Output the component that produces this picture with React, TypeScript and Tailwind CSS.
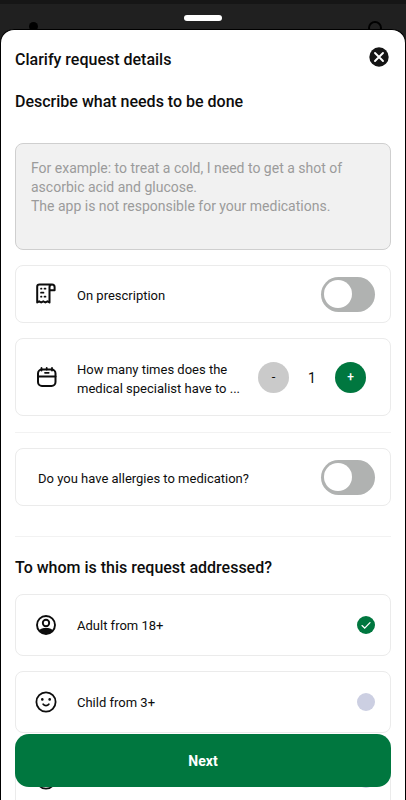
import React, { useState } from 'react';

const ReceiptIcon = () => <svg width="22" height="22" viewBox="0 0 22 22" fill="none" stroke="#0d0d0d" strokeWidth="2" strokeLinejoin="round" strokeLinecap="round" className="shrink-0">
    <path d="M17 1.500H4.500C3 1.500 2.200 2.300 2.200 3.800V19.500l2-1.200 2 1.200 2.100-1.200 2.100 1.200 2-1.200 2.100 1.200V4c0-1.500 1-2.500 2.500-2.500s2.600 1 2.600 2.500v3.300H14.800" />
    <path d="M6 5.700h.5M9.500 5.700h1M6 9.700h2.500M6 13.700h.5M9.500 13.700h1" strokeWidth="1.700" />
  </svg>;

const CalendarIcon = () => <svg width="22" height="22" viewBox="0 0 22 22" fill="none" stroke="#0d0d0d" strokeWidth="2" strokeLinecap="round" className="shrink-0">
    <rect x="3" y="3.500" width="17.500" height="16.500" rx="4" />
    <path d="M3 10.500h17.500" />
    <path d="M6.500 2v2.500M11.700 2v1.500M17 2v2.500M10 6.800h3.700" strokeWidth="1.800" />
  </svg>;

const AdultIcon = () => <svg width="22" height="22" viewBox="0 0 22 22" fill="none" stroke="#0d0d0d" strokeWidth="1.900" className="shrink-0">
    <circle cx="11" cy="11" r="9" />
    <circle cx="11" cy="9" r="3.200" />
    <path d="M4.200 16.200C5.500 14.600 8 14 11 14s5.500.6 6.800 2.200C16.300 18.800 13.800 20 11 20s-5.300-1.200-6.800-3.800Z" fill="#0d0d0d" stroke="none" />
  </svg>;

const SmileIcon = () => <svg width="22" height="22" viewBox="0 0 22 22" fill="none" stroke="#0d0d0d" strokeWidth="1.800" strokeLinecap="round" className="shrink-0">
    <circle cx="11" cy="11" r="9.600" />
    <path d="M8.200 13.200c1.400 1.800 4.200 1.800 5.600 0" />
    <circle cx="7.300" cy="8.400" r="1.300" fill="#0d0d0d" stroke="none" />
    <circle cx="14.700" cy="8.400" r="1.300" fill="#0d0d0d" stroke="none" />
  </svg>;

const Toggle = ({ id }: { id: string }) => <input id={id} type="checkbox" role="switch" className="flex h-[35px] w-[54px] shrink-0 appearance-none items-center rounded-full bg-[#b0b2b1] px-[3px] before:size-7 before:rounded-full before:bg-white checked:justify-end checked:bg-[#00773f]" />;

const App = () => {
  const [visits, setVisits] = useState(1);
  const [person, setPerson] = useState('adult');
  const people = [{
    id: 'adult',
    label: 'Adult from 18+',
    icon: <AdultIcon />
  }, {
    id: 'child',
    label: 'Child from 3+',
    icon: <SmileIcon />
  }, {
    id: 'baby',
    label: 'Child under 3',
    icon: <SmileIcon />
  }];
  return <div className="flex h-screen flex-col overflow-hidden border-t-4 border-[#161616] bg-[#202020] font-[Roboto,sans-serif] text-[#0d0d0d]">
      <header className="relative h-[25px] shrink-0">
        <div className="mx-auto flex h-full w-[38px] items-center pb-px">
          <div className="mt-1 h-[6px] w-full rounded-full bg-white"></div>
        </div>
        <div className="absolute left-[29px] top-[18px] size-[9px] rounded-full bg-black"></div>
        <div className="absolute right-6 top-[17px] size-[14px] rounded-full border-2 border-black"></div>
      </header>

      <main className="relative min-h-0 flex-1 overflow-hidden rounded-t-[14px] border border-b-0 border-black bg-white">
        <div className="h-full overflow-y-auto px-[14px] pb-20 [scrollbar-width:none]">
          <div className="flex items-start justify-between pt-[17px]">
            <h1 className="pt-[3px] text-base font-medium leading-5">Clarify request details</h1>
            <button type="button" aria-label="Close" className="mr-[2px]">
              <svg width="20" height="20" viewBox="0 0 20 20">
                <circle cx="10" cy="10" r="9.700" fill="#141414" />
                <path d="M6 6l8 8M14 6l-8 8" stroke="#fff" strokeWidth="1.900" strokeLinecap="round" />
              </svg>
            </button>
          </div>

          <h2 className="mt-5 text-base font-medium leading-6">
            <label htmlFor="details">Describe what needs to be done</label>
          </h2>
          <textarea id="details" placeholder={'For example: to treat a cold, I need to get a shot of ascorbic acid and glucose.\nThe app is not responsible for your medications.'} className="mt-[29px] block h-[107px] w-full resize-none rounded-lg border border-[#cfcfcf] bg-[#f1f1f1] p-[15px] text-sm leading-[19px] placeholder:text-[#9b9b9b]" />

          <div className="mt-[15px] flex h-[58px] items-center rounded-lg border border-[#ebebeb] pl-[19px] pr-[15px]">
            <ReceiptIcon />
            <label htmlFor="prescription" className="ml-5 flex-1 pt-[2px] text-[13px] leading-[19px]">On prescription</label>
            <Toggle id="prescription" />
          </div>

          <div className="mt-[15px] flex h-[78px] items-center rounded-lg border border-[#ebebeb] pl-[19px] pr-6">
            <CalendarIcon />
            <p className="ml-5 flex-1 pt-1 text-[13px] leading-[19px]">How many times does the medical specialist have to ...</p>
            <div className="flex items-center">
              <button type="button" aria-label="Fewer visits" onClick={() => setVisits(Math.max(1, visits - 1))} className="size-[31px] rounded-full bg-[#cacaca] text-[13px]">-</button>
              <output className="w-[46px] pt-[2px] text-center text-sm">{visits}</output>
              <button type="button" aria-label="More visits" onClick={() => setVisits(visits + 1)} className="size-[31px] rounded-full bg-[#00773f] text-xs font-medium text-white">+</button>
            </div>
          </div>

          <hr className="mt-4 border-[#f2f2f2]" />

          <div className="mt-[15px] flex h-[58px] items-center rounded-lg border border-[#ebebeb] pl-[22px] pr-[15px]">
            <label htmlFor="allergies" className="flex-1 pt-[2px] text-[13px] leading-[19px]">Do you have allergies to medication?</label>
            <Toggle id="allergies" />
          </div>

          <hr className="mt-[30px] border-[#f2f2f2]" />

          <h2 className="mt-[19px] text-base font-medium leading-6">To whom is this request addressed?</h2>
          <div className="mt-[14px] flex flex-col gap-[15px]">
            {people.map(({ id, label, icon }) => <label key={id} className="flex h-[62px] items-center rounded-lg border border-[#ebebeb] pl-[19px] pr-[15px] text-[13px]">
                {icon}
                <span className="ml-5 flex-1 pt-[2px]">{label}</span>
                <span className="grid items-center">
                  <input type="radio" name="person" checked={person === id} onChange={() => setPerson(id)} className="col-start-1 row-start-1 size-[18px] appearance-none rounded-full bg-[#cccfe2] checked:bg-[#00773f]" />
                  {person === id && <svg width="18" height="18" viewBox="0 0 18 18" fill="none" stroke="#fff" strokeWidth="1.300" strokeLinecap="round" className="pointer-events-none col-start-1 row-start-1">
                      <path d="M5 9.600l2.700 2.500 5.300-5.500" />
                    </svg>}
                </span>
              </label>)}
          </div>
        </div>

        <button type="button" className="absolute inset-x-[14px] bottom-[13px] h-[53px] rounded-[14px] bg-[#00773f] text-sm font-bold text-white">Next</button>
      </main>
    </div>;
};
export default App;
